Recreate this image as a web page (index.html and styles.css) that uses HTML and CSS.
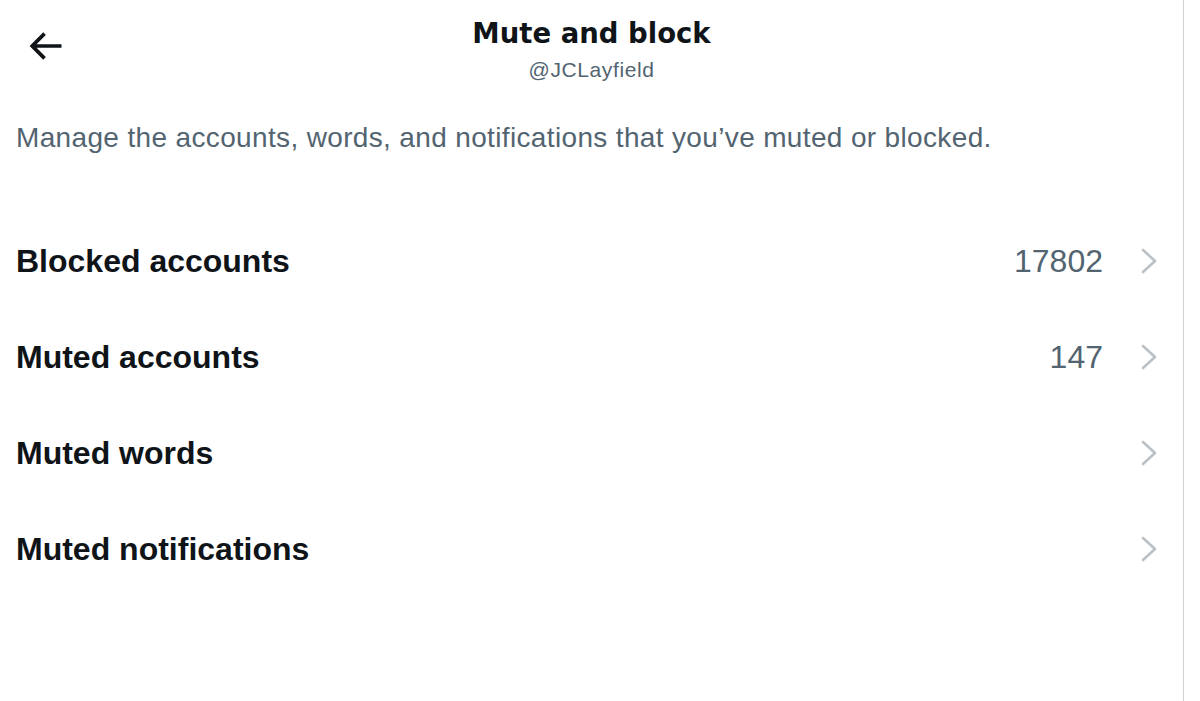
FILE: index.html
```html
<!DOCTYPE html>
<html lang="en">
<head>
<meta charset="utf-8">
<title>Mute and block</title>
<link rel="stylesheet" href="styles.css">
</head>
<body>
<div class="page">
  <main class="column">
    <header class="header">
      <div class="header-left">
        <button class="back" aria-label="Back">
          <svg viewBox="0 0 24 24" width="44" height="44"><path d="M7.414 13l5.043 5.04-1.414 1.42L3.586 12l7.457-7.46 1.414 1.42L7.414 11H21v2H7.414z"/></svg>
        </button>
      </div>
      <div class="header-title">
        <h1 class="title">Mute and block</h1>
        <div class="handle">@JCLayfield</div>
      </div>
      <div class="header-right"></div>
    </header>
    <p class="desc">Manage the accounts, words, and notifications that you’ve muted or blocked.</p>
    <ul class="list">
      <li class="row">
        <span class="label">Blocked accounts</span>
        <span class="count">17802</span>
        <svg class="chev" viewBox="0 0 16 26" width="16" height="26"><polyline points="2,2 14,13 2,24"/></svg>
      </li>
      <li class="row">
        <span class="label">Muted accounts</span>
        <span class="count">147</span>
        <svg class="chev" viewBox="0 0 16 26" width="16" height="26"><polyline points="2,2 14,13 2,24"/></svg>
      </li>
      <li class="row">
        <span class="label">Muted words</span>
        <svg class="chev" viewBox="0 0 16 26" width="16" height="26"><polyline points="2,2 14,13 2,24"/></svg>
      </li>
      <li class="row">
        <span class="label">Muted notifications</span>
        <svg class="chev" viewBox="0 0 16 26" width="16" height="26"><polyline points="2,2 14,13 2,24"/></svg>
      </li>
    </ul>
  </main>
</div>
</body>
</html>
```

FILE: styles.css
```css
* { box-sizing: border-box; }
html, body {
  margin: 0;
  padding: 0;
  background: #ffffff;
}
body {
  font-family: "Liberation Sans", Arial, sans-serif;
  color: #0f1419;
}
.page {
  display: flex;
  height: 701px;
}
.column {
  width: 1184px;
  border-right: 1px solid #cfd4d8;
  height: 701px;
}
.header {
  display: grid;
  grid-template-columns: 1fr auto 1fr;
  padding-top: 16px;
}
.header-left {
  display: flex;
  align-items: flex-start;
}
.back {
  margin: 8px 0 0 23px;
  padding: 0;
  border: 0;
  background: none;
  width: 44px;
  height: 44px;
  display: flex;
}
.back svg { fill: #0f1419; }
.header-title {
  display: flex;
  flex-direction: column;
  align-items: center;
}
.title {
  margin: 0;
  font-family: "DejaVu Sans", "Liberation Sans", sans-serif;
  font-size: 27.5px;
  line-height: 34px;
  font-weight: 700;
}
.handle {
  margin-top: 8px;
  font-size: 21px;
  line-height: 24px;
  letter-spacing: 0.6px;
  color: #536471;
}
.desc {
  margin: 38px 0 0;
  padding: 0 16px;
  font-size: 28px;
  line-height: 36px;
  letter-spacing: 0.35px;
  color: #536471;
}
.list {
  list-style: none;
  margin: 57px 0 0;
  padding: 0;
}
.row {
  display: flex;
  align-items: center;
  height: 96px;
  padding: 0 26px 0 16px;
}
.label {
  flex: 1;
  font-size: 32px;
  line-height: 36px;
  font-weight: 700;
}
.count {
  font-size: 32px;
  line-height: 36px;
  color: #536471;
  margin-right: 38px;
}
.chev {
  fill: none;
  stroke: #b9c0c6;
  stroke-width: 2.6;
  stroke-linecap: round;
  stroke-linejoin: round;
}
```
